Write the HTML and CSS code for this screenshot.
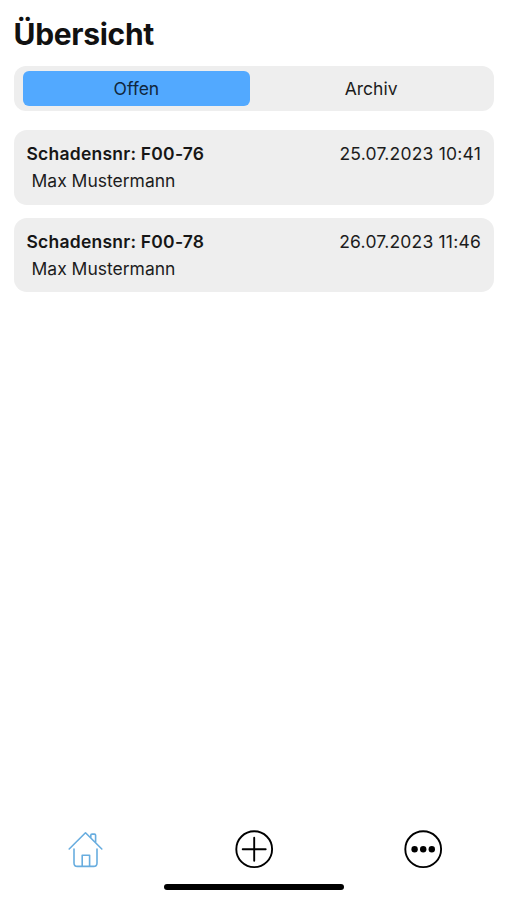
FILE: index.html
```
<!DOCTYPE html>
<html lang="de">
<head>
    <meta charset="UTF-8">
    <meta name="viewport" content="width=device-width, initial-scale=1.0">
    <title>Übersicht</title>
    <link rel="stylesheet" href="styles.css">
</head>
<body>
    <main class="content">
        <h1>Übersicht</h1>

        <div class="tabs">
            <button class="tab active">Offen</button>
            <button class="tab">Archiv</button>
        </div>

        <div class="list">
            <div class="card">
                <div class="card-header">
                    <span class="number">Schadensnr: F00-76</span>
                    <span class="date">25.07.2023 10:41</span>
                </div>
                <div class="name">Max Mustermann</div>
            </div>
            <div class="card">
                <div class="card-header">
                    <span class="number">Schadensnr: F00-78</span>
                    <span class="date">26.07.2023 11:46</span>
                </div>
                <div class="name">Max Mustermann</div>
            </div>
        </div>
    </main>

    <nav class="bottom-nav">
        <a href="#" class="home" aria-label="Übersicht">
            <svg width="40" height="40" viewBox="0 0 40 40">
                <path d="M4.2 20 20.5 3.8 36.8 20M9 20V34q0 3.4 3.4 3.4h16.2Q32 37.4 32 34V20M17.2 37V26.2h7.4V37M25.8 8.5v-2.2q0-1.2 1.2-1.2h2.4q1.2 0 1.2 1.2v7.2" />
            </svg>
        </a>
        <a href="#" aria-label="Neu">
            <svg width="40" height="40" viewBox="0 0 40 40">
                <circle cx="20.2" cy="20.2" r="17.9" />
                <path d="M20.2 8.7v23M8.7 20.2h23" />
            </svg>
        </a>
        <a href="#" aria-label="Mehr">
            <svg width="40" height="40" viewBox="0 0 40 40">
                <circle cx="20.2" cy="20.2" r="17.9" />
                <g class="dots">
                    <circle cx="11.6" cy="20.2" r="3.2" />
                    <circle cx="20.2" cy="20.2" r="3.2" />
                    <circle cx="28.8" cy="20.2" r="3.2" />
                </g>
            </svg>
        </a>
    </nav>
    <div class="home-indicator"></div>
</body>
</html>
```
FILE: styles.css
```
* {
    box-sizing: border-box;
}

body {
    margin: 0;
    height: 100vh;
    display: flex;
    flex-direction: column;
    font-family: Inter, "Liberation Sans", sans-serif;
    font-size: 17.5px;
    line-height: 27px;
    background-color: #fff;
    color: #1c1c1c;
}

.content {
    flex: 1;
    padding: 14px 13px 0 13.5px;
}

h1 {
    margin: 0 0 12px;
    font-size: 30px;
    line-height: 40px;
    font-weight: 700;
    letter-spacing: -0.3px;
    color: #111;
}

.tabs {
    display: flex;
    height: 44.5px;
    padding: 5px 9px;
    margin-bottom: 19.5px;
    gap: 7px;
    background-color: #eee;
    border-radius: 12px;
}

.tab {
    flex: 1;
    padding: 0;
    border: none;
    border-radius: 6px;
    background: transparent;
    font: inherit;
    color: #1c1c1c;
}

.tab.active {
    background-color: #52a9ff;
    color: #10263c;
}

.list {
    display: flex;
    flex-direction: column;
    gap: 13px;
}

.card {
    height: 74.5px;
    padding: 10px 13px;
    background-color: #eee;
    border-radius: 13px;
}

.card-header {
    display: flex;
    justify-content: space-between;
}

.number {
    font-weight: 600;
    letter-spacing: 0.23px;
    color: #161616;
}

.date {
    letter-spacing: 0.2px;
}

.name {
    padding-left: 5px;
}

.bottom-nav {
    display: grid;
    grid-template-columns: repeat(3, 1fr);
    justify-items: center;
    padding-bottom: 14.5px;
}

.bottom-nav a {
    display: flex;
    color: #000;
}

.bottom-nav svg {
    fill: none;
    stroke: currentColor;
    stroke-width: 1.9;
    stroke-linecap: round;
    stroke-linejoin: round;
}

.bottom-nav .home {
    color: #68addf;
}

.bottom-nav .home svg {
    stroke-width: 1.6;
}

.bottom-nav .dots {
    fill: currentColor;
    stroke: none;
}

.home-indicator {
    width: 180px;
    height: 6.5px;
    margin: 0 auto 10px;
    background-color: #000;
    border-radius: 4px;
}
```
